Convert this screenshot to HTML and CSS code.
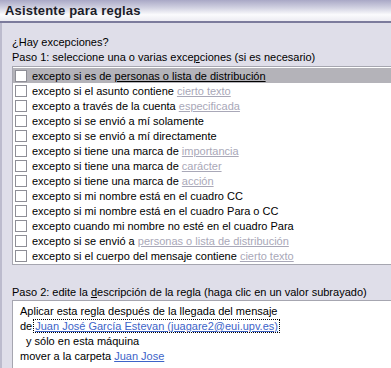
FILE: index.html
```html
<!DOCTYPE html>
<html lang="es">
<head>
<meta charset="utf-8">
<title>Asistente para reglas</title>
<link rel="stylesheet" href="styles.css">
</head>
<body>
<div class="window">
  <div class="header"><span class="title">Asistente para reglas</span></div>
  <div class="main">
    <div class="label q">¿Hay excepciones?</div>
    <div class="label">Paso 1: seleccione una o varias exce<u>p</u>ciones (si es necesario)</div>
    <div class="list">
      <div class="row selected"><span class="cb"></span><span>excepto si es de <span class="lk-sel">personas o lista de distribución</span></span></div>
      <div class="row"><span class="cb"></span><span>excepto si el asunto contiene <span class="lk">cierto texto</span></span></div>
      <div class="row"><span class="cb"></span><span>excepto a través de la cuenta <span class="lk">especificada</span></span></div>
      <div class="row"><span class="cb"></span><span>excepto si se envió a mí solamente</span></div>
      <div class="row"><span class="cb"></span><span>excepto si se envió a mí directamente</span></div>
      <div class="row"><span class="cb"></span><span>excepto si tiene una marca de <span class="lk">importancia</span></span></div>
      <div class="row"><span class="cb"></span><span>excepto si tiene una marca de <span class="lk">carácter</span></span></div>
      <div class="row"><span class="cb"></span><span>excepto si tiene una marca de <span class="lk">acción</span></span></div>
      <div class="row"><span class="cb"></span><span>excepto si mi nombre está en el cuadro CC</span></div>
      <div class="row"><span class="cb"></span><span>excepto si mi nombre está en el cuadro Para o CC</span></div>
      <div class="row"><span class="cb"></span><span>excepto cuando mi nombre no esté en el cuadro Para</span></div>
      <div class="row"><span class="cb"></span><span>excepto si se envió a <span class="lk">personas o lista de distribución</span></span></div>
      <div class="row"><span class="cb"></span><span>excepto si el cuerpo del mensaje contiene <span class="lk">cierto texto</span></span></div>
    </div>
    <div class="label step2">Paso 2: edite la <u>d</u>escripción de la regla (haga clic en un valor subrayado)</div>
    <div class="desc">
      <div class="line">Aplicar esta regla después de la llegada del mensaje</div>
      <div class="line">de<span class="blue focus">Juan José García Estevan (juagare2@eui.upv.es)</span></div>
      <div class="line indent">y sólo en esta máquina</div>
      <div class="line">mover a la carpeta <span class="blue">Juan Jose</span></div>
    </div>
  </div>
</div>
</body>
</html>
```

FILE: styles.css
```css
html, body {
  margin: 0;
  padding: 0;
}
body {
  width: 391px;
  height: 368px;
  overflow: hidden;
  background: #dfdee9;
  font-family: Tahoma, "Liberation Sans", Arial, sans-serif;
  font-size: 11px;
  color: #000;
}
.window {
  width: 391px;
  height: 368px;
  display: flex;
  flex-direction: column;
}
.header {
  height: 21px;
  border-bottom: 2px solid #7c7b9c;
  background: linear-gradient(to bottom, #a9a8c6 0%, #cfcfe0 35%, #fbfbfd 70%, #ecebf2 100%);
  display: flex;
  align-items: center;
  padding-left: 5px;
  flex: none;
}
.title {
  font-family: "Liberation Sans", Arial, sans-serif;
  font-weight: bold;
  font-size: 13px;
  color: #1c1c28;
  letter-spacing: 0.2px;
}
.main {
  flex: 1;
  border-left: 2px solid #bcbbcd;
  padding-left: 10px;
  padding-top: 12px;
  display: flex;
  flex-direction: column;
  min-width: 0;
  overflow: hidden;
}
.label {
  height: 15px;
  line-height: 15px;
  white-space: nowrap;
}
.list {
  margin-top: 1px;
  background: #fff;
  border: 1px solid #a6a6b0;
  border-right: none;
  padding: 1px 0;
  display: flex;
  flex-direction: column;
}
.row {
  height: 15px;
  display: flex;
  align-items: center;
  white-space: nowrap;
}
.row.selected {
  background: #b4b3b9;
}
.cb {
  width: 10px;
  height: 10px;
  border: 1px solid #8e8e96;
  background: #fff;
  margin-left: 2px;
  margin-right: 5px;
  flex: none;
}
.lk {
  color: #a9a8b8;
  text-decoration: underline;
}
.lk-sel {
  color: #000;
  text-decoration: underline;
}
.step2 {
  margin-top: 20px;
}
.desc {
  margin-top: 0;
  flex: 1;
  background: #fff;
  border-top: 1px solid #a6a6b0;
  border-left: 1px solid #a6a6b0;
  padding: 3px 0 0 7px;
}
.line {
  height: 15px;
  line-height: 15px;
  white-space: nowrap;
}
.indent {
  padding-left: 6px;
}
.blue {
  color: #3d63c8;
  text-decoration: underline;
}
.focus {
  outline: 1px dotted #000;
  outline-offset: 0;
  margin-left: 2px;
  padding: 0 1px;
}
```
